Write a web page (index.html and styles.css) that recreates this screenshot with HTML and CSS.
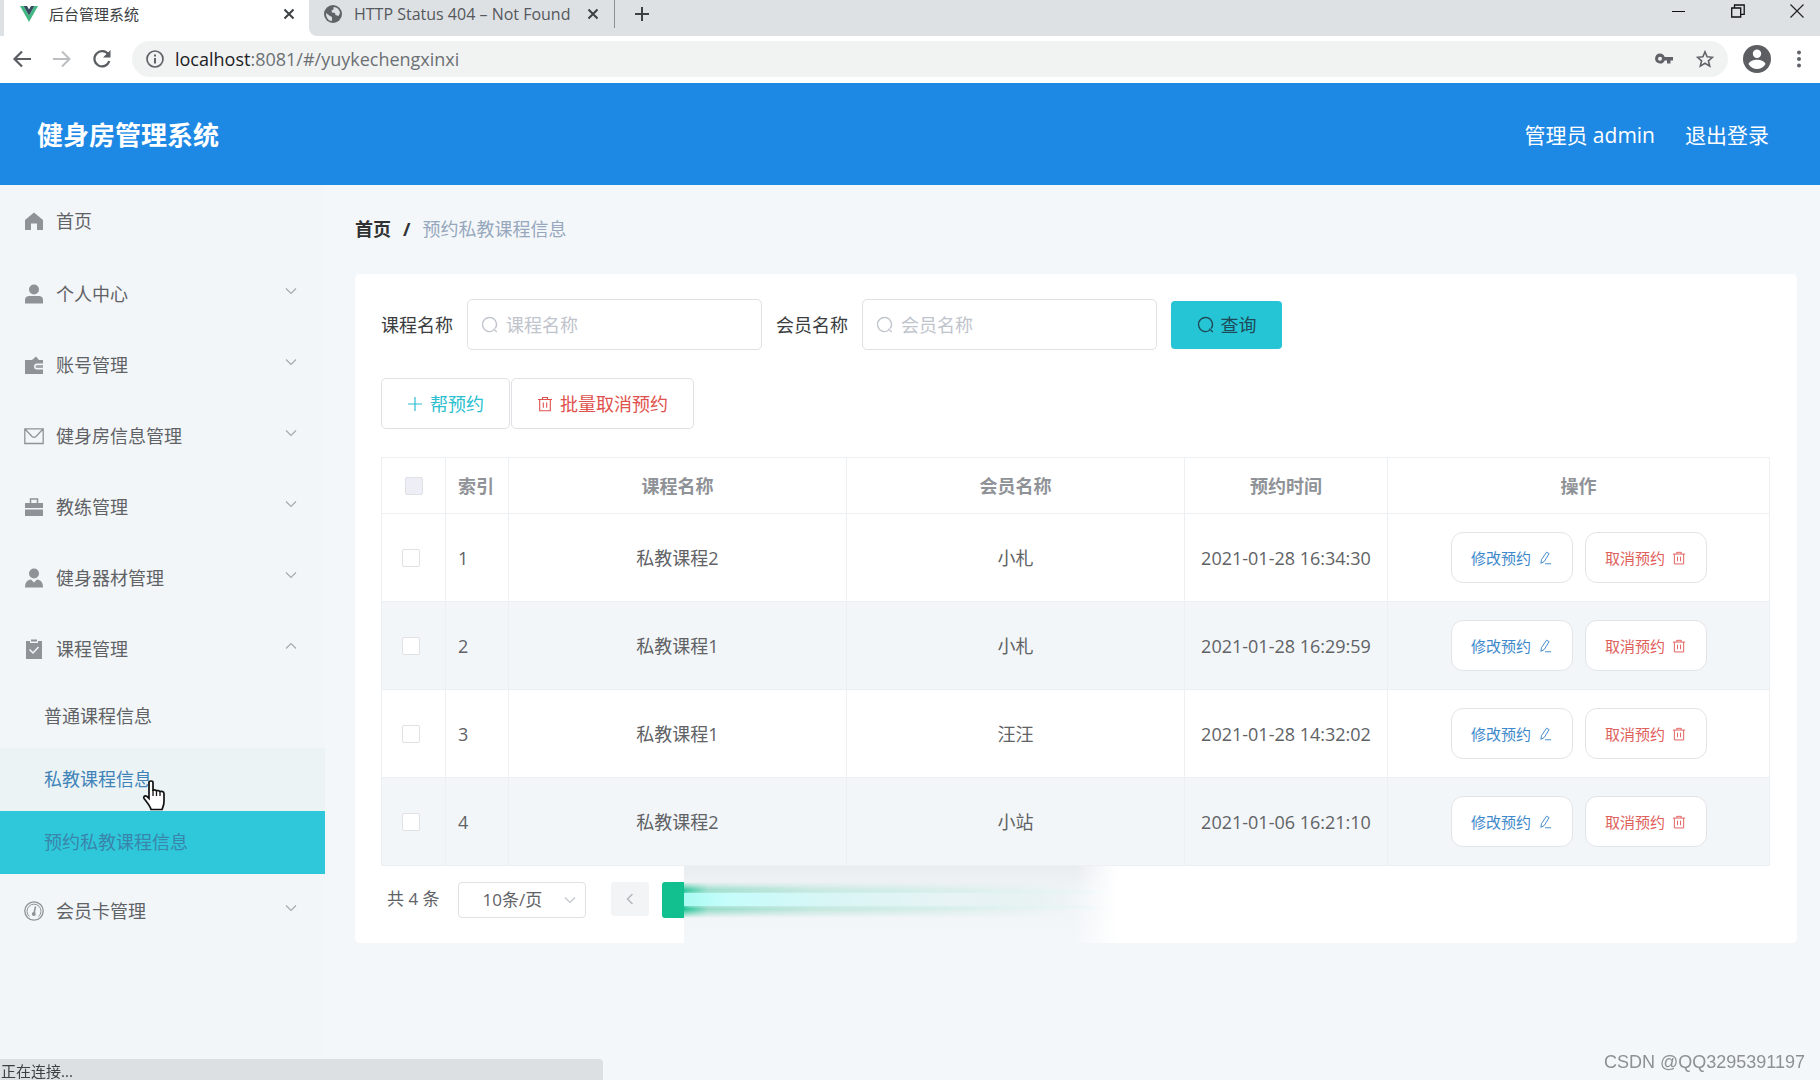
FILE: index.html
```html
<!DOCTYPE html>
<html lang="zh-CN">
<head>
<meta charset="utf-8">
<meta name="viewport" content="width=device-width, initial-scale=1">
<title>后台管理系统</title>
<link rel="stylesheet" href="styles.css">
</head>
<body>
<svg class="sprite" aria-hidden="true">
  <symbol id="i-close" viewBox="0 0 12 12"><path d="M1.5 1.5l9 9M10.5 1.5l-9 9" fill="none" stroke="currentColor" stroke-width="2"/></symbol>
  <symbol id="i-search" viewBox="0 0 18 18"><path d="M12.6 14.2a7 7 0 1 1 1.6-1.6M12.2 12.6l3.6 3.4" fill="none" stroke="currentColor" stroke-width="1.3"/></symbol>
  <symbol id="i-trash" viewBox="0 0 16 16"><path d="M1 3.5h14M5.5 3.5v-2h5v2M2.7 3.5v11.3h10.6V3.500M6.300 6.500v5.200M9.700 6.500v5.200" fill="none" stroke="currentColor" stroke-width="1.100"/></symbol>
  <symbol id="i-edit" viewBox="0 0 16 16"><path d="M9.800 1.300l2.900 1.800-5.600 9-3.800 2 .6-4.200zM8 14.600h7" fill="none" stroke="currentColor" stroke-width="1.100"/></symbol>
  <symbol id="i-down" viewBox="0 0 12 8"><path d="M1 1.500l5 5 5-5" fill="none" stroke="currentColor" stroke-width="1.100"/></symbol>
  <symbol id="i-up" viewBox="0 0 12 8"><path d="M1 6.500l5-5 5 5" fill="none" stroke="currentColor" stroke-width="1.100"/></symbol>
</svg>

<div class="browser">
  <div class="tabs">
    <div class="tab tab-active">
      <svg width="18" height="18" viewBox="0 0 18 18"><path d="M0 1h3.600L9 10.500 14.400 1H18L9 17z" fill="#41b883"/><path d="M3.600 1H7l2 3.500L11 1h3.400L9 10.500z" fill="#35495e"/></svg>
      <span class="tab-title">后台管理系统</span>
      <button class="plain" aria-label="关闭标签页"><svg width="12" height="12"><use href="#i-close"/></svg></button>
    </div>
    <div class="tab tab-second">
      <svg width="18" height="18" viewBox="0 0 18 18"><circle cx="9" cy="9" r="9" fill="#5f6368"/><path d="M2 8l4 3 2 1v4c-3.500 0-6-3.500-6-8zM9.500 2c3.500 0 6.200 2.800 6.500 6l-1.500 3-3-1-.5-2-3-.5-.5-2 2-1z" fill="#dee1e4"/></svg>
      <span class="tab-title">HTTP Status 404 – Not Found</span>
      <button class="plain" aria-label="关闭标签页"><svg width="12" height="12"><use href="#i-close"/></svg></button>
    </div>
    <button class="plain new-tab" aria-label="新标签页"><svg width="16" height="16" viewBox="0 0 16 16"><path d="M8 1v14M1 8h14" stroke="#3c4043" stroke-width="2"/></svg></button>
    <div class="window-controls">
      <button class="plain" aria-label="最小化"><svg width="14" height="14" viewBox="0 0 14 14"><path d="M0 7.500h13" stroke="#111"/></svg></button>
      <button class="plain" aria-label="还原"><svg width="14" height="14" viewBox="0 0 14 14"><path d="M.7 4h9v9h-9zM3.500 4V1h9.700v9.300H10" fill="none" stroke="#111" stroke-width="1.300"/></svg></button>
      <button class="plain" aria-label="关闭"><svg width="14" height="14" viewBox="0 0 14 14"><path d="M.5.5l13 13M13.500.5l-13 13" stroke="#222" stroke-width="1.200"/></svg></button>
    </div>
  </div>
  <div class="toolbar">
    <button class="plain" aria-label="后退"><svg width="20" height="20" viewBox="0 0 20 20"><path d="M19 10H3M10 2.500L2.500 10l7.500 7.500" fill="none" stroke="#5a5d61" stroke-width="2.200"/></svg></button>
    <button class="plain" aria-label="前进"><svg width="20" height="20" viewBox="0 0 20 20"><path d="M1 10h16M10 2.500l7.500 7.500-7.500 7.500" fill="none" stroke="#bcbec1" stroke-width="2"/></svg></button>
    <button class="plain" aria-label="重新加载"><svg width="20" height="20" viewBox="0 0 20 20"><path d="M16.300 5.500A7.600 7.600 0 1 0 17.300 12" fill="none" stroke="#5a5d61" stroke-width="2.200"/><path d="M18.500 1v7.500H11z" fill="#5a5d61"/></svg></button>
    <div class="omnibox">
      <svg width="18" height="18" viewBox="0 0 18 18"><circle cx="9" cy="9" r="8" fill="none" stroke="#5f6368" stroke-width="1.700"/><path d="M9 8v5.500M9 4.500v2" stroke="#5f6368" stroke-width="2"/></svg>
      <span class="url"><b>localhost</b>:8081/#/yuykechengxinxi</span>
      <svg width="18" height="12" viewBox="0 0 18 12"><path d="M5 0.500a5 5 0 1 0 4.700 7H12V10.500h3.500V7.500H18V4H9.700A5 5 0 0 0 5 .5zm0 3.300a2 2 0 1 1 0 4 2 2 0 0 1 0-4z" fill="#5f6368"/></svg>
      <svg width="18" height="18" viewBox="0 0 18 18"><path d="M9 1.800l2.100 5 5.400.5-4.100 3.500 1.300 5.300L9 13.300l-4.700 2.800 1.300-5.300-4.100-3.500 5.400-.5z" fill="none" stroke="#5f6368" stroke-width="1.600"/></svg>
    </div>
    <div class="profile">
      <svg width="28" height="28" viewBox="0 0 28 28"><circle cx="14" cy="14" r="14" fill="#5c5e62"/><circle cx="14" cy="8.800" r="4.200" fill="#fff"/><path d="M5.500 19c1.500-3.200 5-4.200 8.500-4.200s7 1 8.500 4.200c-2 3.300-5 5-8.500 5s-6.500-1.700-8.500-5z" fill="#fff"/></svg>
      <button class="plain" aria-label="菜单"><svg width="4" height="18" viewBox="0 0 4 18"><g fill="#5f6368"><circle cx="2" cy="2.500" r="2"/><circle cx="2" cy="9" r="2"/><circle cx="2" cy="15.500" r="2"/></g></svg></button>
    </div>
  </div>
</div>

<header class="header">
  <h1>健身房管理系统</h1>
  <span class="user">管理员 admin</span>
  <a href="#logout">退出登录</a>
</header>

<div class="layout">
  <nav class="sidebar">
    <a class="item" href="#home"><svg width="20" height="20" viewBox="0 0 20 20"><path d="M10 1.500L1 9v10h6v-6.500h6V19h6V9z" fill="#8f9398"/></svg><span>首页</span></a>
    <button class="item"><svg width="20" height="20" viewBox="0 0 20 20"><circle cx="10" cy="5.500" r="5" fill="#8f9398"/><path d="M1 19.500v-3.500c0-3 2-4 4-4h10c2 0 4 1 4 4v3.500z" fill="#8f9398"/></svg><span>个人中心</span><svg class="arrow"><use href="#i-down"/></svg></button>
    <button class="item"><svg width="20" height="20" viewBox="0 0 20 20"><path d="M1 5h7l4-3.500L15 5h4v3.500h-6a3 3 0 0 0 0 6h6V19H1z" fill="#8f9398"/><path d="M13 10h6v3h-6a1.500 1.500 0 0 1 0-3z" fill="#a5a9ad"/></svg><span>账号管理</span><svg class="arrow"><use href="#i-down"/></svg></button>
    <button class="item"><svg width="20" height="20" viewBox="0 0 20 20"><path d="M.8 2.800h18.400v14.700H.8zM1 3l7 7.500q2 1.500 4 0L19 3" fill="none" stroke="#8f9398" stroke-width="1.300"/></svg><span>健身房信息管理</span><svg class="arrow"><use href="#i-down"/></svg></button>
    <button class="item"><svg width="20" height="20" viewBox="0 0 20 20"><path d="M6.500 6V2h7v4" fill="none" stroke="#8f9398" stroke-width="1.500"/><path d="M1 6h18v5H1zM1 12.500h18V19H1z" fill="#8f9398"/></svg><span>教练管理</span><svg class="arrow"><use href="#i-down"/></svg></button>
    <button class="item"><svg width="20" height="20" viewBox="0 0 20 20"><circle cx="10" cy="5.500" r="5" fill="#8f9398"/><path d="M1 19.500c0-5 2-7.500 6-8l3 3 3-3c4 .5 6 3 6 8z" fill="#8f9398"/></svg><span>健身器材管理</span><svg class="arrow"><use href="#i-down"/></svg></button>
    <button class="item" aria-expanded="true"><svg width="20" height="20" viewBox="0 0 20 20"><path d="M2 2h4v2h8V2h4v18H2zM7 .5h6v2H7z" fill="#8f9398"/><path d="M5.500 10.500l3.500 3.500 5.500-6" fill="none" stroke="#f3f6f8" stroke-width="1.500"/></svg><span>课程管理</span><svg class="arrow"><use href="#i-up"/></svg></button>
    <div class="submenu">
      <a href="#putong">普通课程信息</a>
      <a class="hovered" href="#sijiao">私教课程信息
        <svg class="pointer" width="24" height="32" viewBox="0 0 24 32"><path d="M7 2.500c0-2 4-2 4 0v8.500c0-1.500 3.500-1.500 3.500.5 0-1.500 3.500-1.300 3.500.7 0-1.200 4-1.200 4 1.300v8c0 4-1 5-2 8H9c-1-4-4-7-7-11-1-2 1-3.500 3-2l2 2z" fill="#fff" stroke="#111" stroke-width="1.700"/><path d="M11 10v6M14.500 11v5M18 12v4" stroke="#111" stroke-width="1.300"/></svg>
      </a>
      <a class="active" href="#yuyue" aria-current="page">预约私教课程信息</a>
    </div>
    <button class="item"><svg width="20" height="20" viewBox="0 0 20 20"><circle cx="10" cy="10" r="9.200" fill="none" stroke="#8f9398" stroke-width="1.300"/><path d="M5.500 15.500a7 7 0 1 1 9 0" fill="none" stroke="#8f9398"/><path d="M11.500 5.500l-1.500 7" stroke="#8f9398" stroke-width="1.500"/><circle cx="9.800" cy="13" r="2" fill="#8f9398"/></svg><span>会员卡管理</span><svg class="arrow"><use href="#i-down"/></svg></button>
  </nav>

  <main class="main">
    <div class="breadcrumb"><a href="#home">首页</a><b>/</b><span>预约私教课程信息</span></div>
    <section class="card">
      <form class="search">
        <label for="course">课程名称</label>
        <span class="field"><svg width="18" height="18"><use href="#i-search"/></svg><input id="course" type="text" placeholder="课程名称"></span>
        <label for="member">会员名称</label>
        <span class="field"><svg width="18" height="18"><use href="#i-search"/></svg><input id="member" type="text" placeholder="会员名称"></span>
        <button class="query" type="button"><svg width="18" height="18"><use href="#i-search"/></svg>查询</button>
      </form>
      <div class="actions">
        <button class="btn add"><svg width="16" height="16" viewBox="0 0 16 16"><path d="M8 1v14M1 8h14" stroke="currentColor" stroke-width="1.200"/></svg>帮预约</button>
        <button class="btn remove"><svg width="16" height="16"><use href="#i-trash"/></svg>批量取消预约</button>
      </div>
      <table>
        <colgroup><col class="c-check"><col class="c-index"><col><col><col class="c-time"><col class="c-ops"></colgroup>
        <thead>
          <tr><th class="check-all"><input type="checkbox" disabled aria-label="全选"></th><th class="start">索引</th><th>课程名称</th><th>会员名称</th><th>预约时间</th><th>操作</th></tr>
        </thead>
        <tbody>
          <tr><td class="check"><input type="checkbox" aria-label="选择 1"></td><td class="start">1</td><td>私教课程2</td><td>小札</td><td>2021-01-28 16:34:30</td><td><div class="ops"><button class="edit">修改预约<svg width="14" height="14"><use href="#i-edit"/></svg></button><button class="cancel">取消预约<svg width="14" height="14"><use href="#i-trash"/></svg></button></div></td></tr>
          <tr><td class="check"><input type="checkbox" aria-label="选择 2"></td><td class="start">2</td><td>私教课程1</td><td>小札</td><td>2021-01-28 16:29:59</td><td><div class="ops"><button class="edit">修改预约<svg width="14" height="14"><use href="#i-edit"/></svg></button><button class="cancel">取消预约<svg width="14" height="14"><use href="#i-trash"/></svg></button></div></td></tr>
          <tr><td class="check"><input type="checkbox" aria-label="选择 3"></td><td class="start">3</td><td>私教课程1</td><td>汪汪</td><td>2021-01-28 14:32:02</td><td><div class="ops"><button class="edit">修改预约<svg width="14" height="14"><use href="#i-edit"/></svg></button><button class="cancel">取消预约<svg width="14" height="14"><use href="#i-trash"/></svg></button></div></td></tr>
          <tr><td class="check"><input type="checkbox" aria-label="选择 4"></td><td class="start">4</td><td>私教课程2</td><td>小站</td><td>2021-01-06 16:21:10</td><td><div class="ops"><button class="edit">修改预约<svg width="14" height="14"><use href="#i-edit"/></svg></button><button class="cancel">取消预约<svg width="14" height="14"><use href="#i-trash"/></svg></button></div></td></tr>
        </tbody>
      </table>
      <div class="pager">
        <span class="total">共 4 条</span>
        <span class="size"><select aria-label="每页条数"><option>10条/页</option></select><svg width="12" height="8"><use href="#i-down"/></svg></span>
        <button class="prev" aria-label="上一页" disabled><svg width="8" height="12" viewBox="0 0 8 12"><path d="M6.500 1l-5 5 5 5" fill="none" stroke="#b4b8be" stroke-width="1.500"/></svg></button>
        <button class="page" aria-label="第 1 页"></button>
        <div class="trail"><div class="trail-green"></div><div class="trail-light"></div></div>
      </div>
    </section>
  </main>
</div>

<div class="status">正在连接...</div>
<div class="watermark">CSDN @QQ3295391197</div>
</body>
</html>
```
FILE: styles.css
```css
* { box-sizing: border-box; }

body {
  margin: 0;
  min-height: 100vh;
  display: flex;
  flex-direction: column;
  background: #f4f7f9;
  color: #606266;
  font: 18px/24px "Open Sans", "Noto Sans CJK SC", sans-serif;
}

button, input, select { font: inherit; color: inherit; }
button { cursor: pointer; }
a { color: inherit; text-decoration: none; }
svg { flex: none; display: block; }
.sprite { position: absolute; width: 0; height: 0; }
.plain { border: 0; padding: 0; background: none; color: #3c4043; }

/* Browser frame */
.tabs {
  display: flex;
  height: 36px;
  padding-left: 4px;
  background: #dee1e4;
}
.tab {
  display: flex;
  align-items: center;
  padding-bottom: 8px;
}
.tab-title { flex: 1; white-space: nowrap; }
.tab-active {
  width: 305px;
  padding-left: 16px;
  padding-right: 14px;
  gap: 11px;
  background: #fff;
  color: #3c4043;
  font-size: 15px;
}
.tab-second {
  width: 305px;
  padding-left: 15px;
  padding-right: 15px;
  gap: 12px;
  border-bottom-left-radius: 8px;
  box-shadow: -4px 4px 0 #fff;
  background: #dee1e4;
  color: #55585c;
  font-size: 16px;
}
.new-tab {
  height: 28px;
  padding-left: 19px;
  border-left: 1px solid #8d9093;
}
.window-controls {
  display: flex;
  gap: 45px;
  height: 22px;
  margin-left: auto;
  padding-right: 16px;
}
.toolbar {
  position: relative;
  display: flex;
  align-items: center;
  gap: 20px;
  height: 47px;
  padding: 0 19px 2px 12px;
  background: #fff;
}
.omnibox {
  flex: 1;
  display: flex;
  align-items: center;
  height: 36px;
  padding: 0 14px;
  gap: 23px;
  border-radius: 18px;
  background: #f1f3f3;
}
.url { flex: 1; margin-left: -12px; color: #6c7074; }
.url b { font-weight: 400; color: #202124; }
.profile { display: flex; align-items: center; gap: 26px; margin-left: -5px; }

/* Page header */
.header {
  display: flex;
  align-items: center;
  gap: 30px;
  height: 102px;
  padding: 2px 51px 0 37px;
  background: #1e88e5;
  color: #fff;
  font-size: 21px;
}
.header h1 { flex: 1; margin: 0; font-size: 26px; line-height: 36px; }

.layout { flex: 1; display: flex; }

/* Side menu */
.sidebar {
  width: 325px;
  flex: none;
  background: #f3f6f8;
}
.item {
  display: flex;
  align-items: center;
  gap: 12px;
  width: 100%;
  height: 71px;
  padding: 0 28px 0 24px;
  border: 0;
  background: none;
  text-align: left;
}
a.item { margin-bottom: 2px; }
.item span { flex: 1; }
.arrow { width: 12px; height: 8px; margin-bottom: 6px; color: #a4a8ad; }
.submenu { padding: 1px 0; }
.submenu a {
  position: relative;
  display: block;
  height: 63px;
  padding-left: 44px;
  line-height: 63px;
}
.submenu .hovered { background: #ebf3f5; color: #3f83b8; }
.submenu .active { background: #2ec8da; color: #3a85ab; }
.pointer { position: absolute; left: 142px; top: 32px; z-index: 2; }

/* Content */
.main { flex: 1; min-width: 0; padding: 32px 23px 0 30px; }
.breadcrumb { display: flex; gap: 12px; margin-bottom: 33px; color: #97a8be; }
.breadcrumb a, .breadcrumb b { color: #303133; font-weight: 700; }
.card {
  padding: 25px 27px 0 26px;
  border-radius: 5px;
  background: #fff;
}
.search { display: flex; align-items: center; gap: 14px; color: #3a3c40; }
.field {
  display: flex;
  align-items: center;
  gap: 7px;
  width: 295px;
  height: 51px;
  padding: 0 13px;
  border: 1px solid #dfe1e4;
  border-radius: 5px;
  color: #c0c4cc;
}
.field input { width: 100%; min-width: 0; padding: 0; border: 0; outline: 0; background: none; color: #606266; }
.field input::placeholder { color: #c0c4cc; opacity: 1; }
.query {
  display: flex;
  align-items: center;
  justify-content: center;
  gap: 6px;
  width: 111px;
  height: 48px;
  padding: 0;
  border: 0;
  border-radius: 4px;
  background: #26c5d6;
  color: #1d4a56;
}
.actions { display: flex; gap: 1px; margin: 28px 0; }
.btn {
  display: flex;
  align-items: center;
  gap: 7px;
  height: 51px;
  padding: 0 25px;
  border: 1px solid #dfe1e4;
  border-radius: 5px;
  background: #fff;
}
.add { color: #2bbfd0; }
.remove { color: #e0524d; }

table {
  width: 100%;
  table-layout: fixed;
  border-collapse: collapse;
  text-align: center;
}
.c-check { width: 64px; }
.c-index { width: 63px; }
.c-time { width: 203px; }
.c-ops { width: 382px; }
th, td { padding: 0; border: 1px solid #edf0f2; }
th { height: 56px; color: #8f9297; }
td { height: 88px; }
tbody tr:nth-child(even) { background: #f3f6f8; }
.start { padding-left: 12px; text-align: left; }
.check { padding-left: 20px; text-align: left; }
table input {
  appearance: none;
  display: block;
  width: 18px;
  height: 18px;
  margin: 0;
  border: 1px solid #dfe1e5;
  border-radius: 2px;
  background: #fff;
}
.check-all { padding-left: 23px; }
.check-all input { background: #edeef6; }
.ops { display: flex; justify-content: center; gap: 12px; font-size: 15px; }
.ops button {
  display: flex;
  align-items: center;
  justify-content: center;
  gap: 7px;
  width: 122px;
  height: 51px;
  padding: 0;
  border: 1px solid #e2e4e8;
  border-radius: 12px;
  background: #fff;
}
.ops .edit { color: #4088cc; }
.ops .cancel { color: #e0605c; }

/* Pagination */
.pager { display: flex; align-items: flex-start; height: 77px; font-size: 17px; }
.total { margin: 21px 18px 0 6px; }
.size {
  display: flex;
  align-items: center;
  width: 128px;
  height: 36px;
  margin: 16px 25px 0 0;
  padding: 0 9px 0 24px;
  border: 1px solid #dfe1e4;
  border-radius: 4px;
  color: #c0c4cc;
}
.size select { appearance: none; flex: 1; min-width: 0; padding: 0; border: 0; background: none; color: #606266; }
.prev {
  display: grid;
  place-items: center;
  width: 38px;
  height: 34px;
  margin: 16px 13px 0 0;
  padding: 0;
  border: 0;
  border-radius: 3px;
  background: #f3f4f6;
}
.page {
  width: 22px;
  height: 36px;
  margin-top: 16px;
  padding: 0;
  border: 0;
  border-radius: 3px 0 0 3px;
  background: #12c08f;
}
.trail {
  flex: 0 1 434px;
  align-self: stretch;
  padding-top: 16px;
  background: linear-gradient(#e9ecf0, #f0f4f6 30%, #f4f7f9);
  -webkit-mask-image: linear-gradient(to right, #000 90%, transparent);
  mask-image: linear-gradient(to right, #000 90%, transparent);
}
.trail-green {
  height: 36px;
  background: linear-gradient(to right, #12c08f, #93dac6 24px, #c2e6dc 130px, #cdeae3 200px, transparent 90%);
  -webkit-mask-image: linear-gradient(transparent, #000 25%, #000 75%, transparent);
  mask-image: linear-gradient(transparent, #000 25%, #000 75%, transparent);
}
.trail-light {
  position: relative;
  height: 13px;
  margin-top: -25px;
  background: linear-gradient(to right, #a8fbf2, #c4fdfb 40px, #d9f5f5 150px, #e8f3f5 270px, transparent 90%);
  box-shadow: 0 0 4px #d9f5f5;
}

.status {
  position: fixed;
  left: 0;
  bottom: 0;
  width: 603px;
  height: 21px;
  padding: 0 1px;
  border-radius: 0 4px 0 0;
  background: #dde0e3;
  color: #3c4043;
  font-size: 15px;
}
.watermark {
  position: fixed;
  right: 15px;
  bottom: 6px;
  color: #8d9094;
  font-family: "Liberation Sans", sans-serif;
}
```
